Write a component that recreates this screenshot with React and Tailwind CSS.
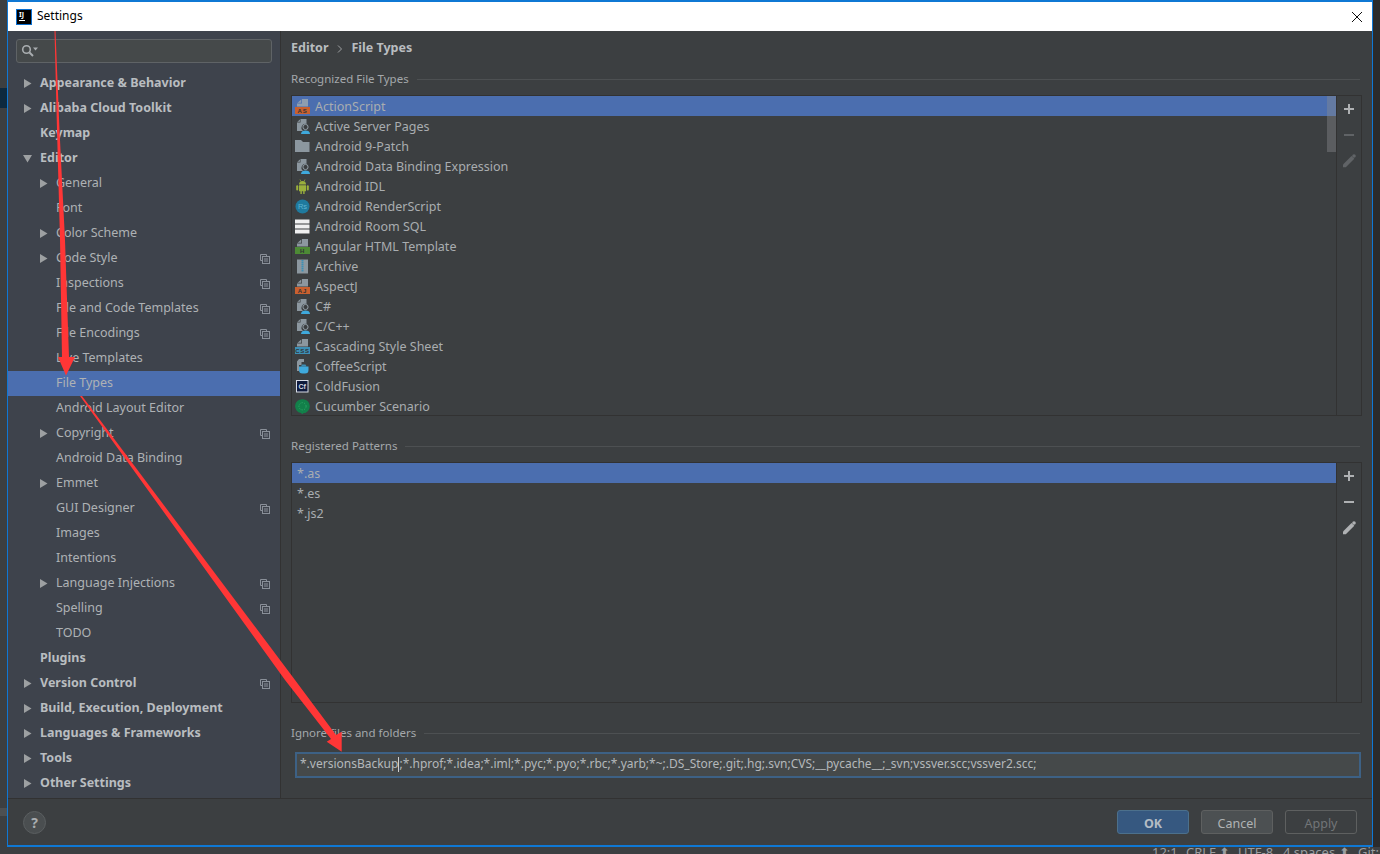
import React from 'react';

const sidebarItems = [
  { label: 'Appearance & Behavior', bold: true, arrow: 'right' },
  { label: 'Alibaba Cloud Toolkit', bold: true, arrow: 'right' },
  { label: 'Keymap', bold: true },
  { label: 'Editor', bold: true, arrow: 'down' },
  { label: 'General', arrow: 'right', sub: true },
  { label: 'Font', sub: true },
  { label: 'Color Scheme', arrow: 'right', sub: true },
  { label: 'Code Style', arrow: 'right', sub: true, copy: true },
  { label: 'Inspections', sub: true, copy: true },
  { label: 'File and Code Templates', sub: true, copy: true },
  { label: 'File Encodings', sub: true, copy: true },
  { label: 'Live Templates', sub: true },
  { label: 'File Types', sub: true, selected: true },
  { label: 'Android Layout Editor', sub: true },
  { label: 'Copyright', arrow: 'right', sub: true, copy: true },
  { label: 'Android Data Binding', sub: true },
  { label: 'Emmet', arrow: 'right', sub: true },
  { label: 'GUI Designer', sub: true, copy: true },
  { label: 'Images', sub: true },
  { label: 'Intentions', sub: true },
  { label: 'Language Injections', arrow: 'right', sub: true, copy: true },
  { label: 'Spelling', sub: true, copy: true },
  { label: 'TODO', sub: true },
  { label: 'Plugins', bold: true },
  { label: 'Version Control', bold: true, arrow: 'right', copy: true },
  { label: 'Build, Execution, Deployment', bold: true, arrow: 'right' },
  { label: 'Languages & Frameworks', bold: true, arrow: 'right' },
  { label: 'Tools', bold: true, arrow: 'right' },
  { label: 'Other Settings', bold: true, arrow: 'right' },
];

const fileTypes = [
  { label: 'ActionScript', icon: 'as', selected: true },
  { label: 'Active Server Pages', icon: 'person' },
  { label: 'Android 9-Patch', icon: 'folder' },
  { label: 'Android Data Binding Expression', icon: 'person' },
  { label: 'Android IDL', icon: 'android' },
  { label: 'Android RenderScript', icon: 'rs' },
  { label: 'Android Room SQL', icon: 'room' },
  { label: 'Angular HTML Template', icon: 'html' },
  { label: 'Archive', icon: 'archive' },
  { label: 'AspectJ', icon: 'aj' },
  { label: 'C#', icon: 'person' },
  { label: 'C/C++', icon: 'person' },
  { label: 'Cascading Style Sheet', icon: 'css' },
  { label: 'CoffeeScript', icon: 'coffee' },
  { label: 'ColdFusion', icon: 'cf' },
  { label: 'Cucumber Scenario', icon: 'cucumber' },
];

const Page = () => <path d="M7 0h6v7.5H2V4.5h5zM2.5 3.8L6.3 0.6v3.2z" fill="#9aa7b0" fillOpacity="0.85" />;

const Badge = ({ color, text }) => (
  <>
    <Page />
    <rect x="0" y="8" width="15" height="7" fill={color} />
    <text x="7.5" y="13.8" textAnchor="middle" fontSize="6" fontWeight="700" fill="#2f3234" letterSpacing="0.8" fontFamily="Liberation Sans, sans-serif">{text}</text>
  </>
);

const FileIcon = ({ type }) => {
  let body = null;
  if (type === 'as') body = <Badge color="#c9602f" text="AS" />;
  if (type === 'aj') body = <Badge color="#c9602f" text="AJ" />;
  if (type === 'html') body = <Badge color="#4d8a35" text="H" />;
  if (type === 'css') body = <Badge color="#3d8fb5" text="CSS" />;
  if (type === 'person') body = (
    <>
      <path d="M5.5 0h6v5a4 4 0 0 0-3.5 7H2V3.5h3.5zM2.3 2.8L5 0.4v2.4z" fill="#9aa7b0" fillOpacity="0.85" />
      <circle cx="10.5" cy="8" r="2.6" fill="#3c3f41" stroke="#9aa7b0" strokeWidth="0.9" />
      <path d="M6 15c0-2.6 2-3.6 4.5-3.6s4.5 1 4.5 3.6z" fill="#3fa9dc" />
    </>
  );
  if (type === 'folder') body = <path d="M0 1h6l2 2h6.5v10H0z" fill="#9aa7b0" fillOpacity="0.85" />;
  if (type === 'android') body = (
    <>
      <path d="M4 5.5a3.5 3.5 0 0 1 7 0z" fill="#9ab03c" />
      <path d="M4 6.3h7v6H9.6V15H8.2v-2.7H6.8V15H5.4v-2.7H4z" fill="#9ab03c" />
      <rect x="1.2" y="6.3" width="2" height="5.2" rx="1" fill="#9ab03c" />
      <rect x="11.8" y="6.3" width="2" height="5.2" rx="1" fill="#9ab03c" />
      <path d="M5 0.5l1 2M10 0.5l-1 2" stroke="#9ab03c" strokeWidth="0.7" />
    </>
  );
  if (type === 'rs') body = (
    <>
      <circle cx="7.5" cy="7.5" r="7" fill="#1f7a9e" />
      <text x="7.5" y="10.2" textAnchor="middle" fontSize="7.5" fill="#5fb4d0" fontFamily="Liberation Sans, sans-serif">Rs</text>
    </>
  );
  if (type === 'room') body = (
    <>
      <rect x="0" y="0.5" width="14.5" height="4" fill="#f0f0f0" />
      <rect x="0" y="5.5" width="14.5" height="4" fill="#f0f0f0" />
      <rect x="0" y="10.5" width="14.5" height="4" fill="#f0f0f0" />
    </>
  );
  if (type === 'archive') body = (
    <>
      <rect x="2" y="0.5" width="11" height="14" fill="#9aa7b0" fillOpacity="0.85" />
      <path d="M6.5 1h2v1.5h-2zM8.5 3h-2v1.5h2zM6.5 5h2v1.5h-2zM8.5 7h-2v1.5h2zM6.5 9h2v1.5h-2zM8.5 11h-2v1.5h2z" fill="#3d8fb5" />
    </>
  );
  if (type === 'coffee') body = (
    <>
      <path d="M4 0h5v3H6.5v3H2V2.5z" fill="#9aa7b0" fillOpacity="0.85" />
      <path d="M2 6h2v6H2z" fill="#9aa7b0" fillOpacity="0.85" />
      <path d="M4 7.5h9.5v3.5a3.5 3.5 0 0 1-3.5 3.5H7.5A3.5 3.5 0 0 1 4 11z" fill="#3fa9dc" />
      <path d="M7 5.5h3.5l1 2H6z" fill="#3fa9dc" fillOpacity="0.75" />
    </>
  );
  if (type === 'cf') body = (
    <>
      <rect x="1.5" y="1.5" width="11.5" height="11.5" fill="#0f1a3c" stroke="#d7dbe6" strokeWidth="1" />
      <text x="7.2" y="10" textAnchor="middle" fontSize="7" fontWeight="700" fill="#d7dbe6" fontFamily="Liberation Sans, sans-serif">Cf</text>
    </>
  );
  if (type === 'cucumber') body = (
    <>
      <path d="M7.5 0.2a7 7 0 0 1 0.6 14L7.5 15.4 6 14.1A7 7 0 0 1 7.5 0.2z" fill="#12804a" />
      <circle cx="7.5" cy="7.3" r="3.6" fill="none" stroke="#2fa868" strokeWidth="1" strokeDasharray="1.3 1.3" />
    </>
  );
  return (
    <svg width="15" height="15" viewBox="0 0 15 15" className="shrink-0">{body}</svg>
  );
};

const CopyIcon = () => (
  <svg width="10" height="10" viewBox="0 0 10 10" className="shrink-0">
    <path d="M0.5 0.5h6v2M0.5 0.5v6h2" fill="none" stroke="#8a9099" />
    <rect x="2.5" y="2.5" width="7" height="7" fill="none" stroke="#8a9099" />
    <path d="M4 5h4M4 7h4" stroke="#8a9099" />
  </svg>
);

const Caret = ({ dir }) => (
  <svg width="9" height="9" viewBox="0 0 9 9" className="shrink-0">
    {dir === 'down'
      ? <path d="M0 1h9L4.5 8.5z" fill="#9da0a2" />
      : <path d="M1 0v9l7.5-4.5z" fill="#9da0a2" />}
  </svg>
);

const SideRow = ({ item }) => (
  <div className={`h-[25px] flex items-center pr-[10px] ${item.selected ? 'bg-[#4b6eaf]' : ''} ${item.sub ? 'pl-[31px]' : 'pl-[15px]'}`}>
    <div className="w-[17px] shrink-0 flex items-center">{item.arrow && <Caret dir={item.arrow} />}</div>
    <span className={`flex-1 text-[12.5px] whitespace-nowrap ${item.bold ? 'font-bold text-[#b9bdc0]' : 'text-[#aeb2b5]'}`}>{item.label}</span>
    {item.copy && <CopyIcon />}
  </div>
);

const SectionTitle = ({ children }) => (
  <div className="flex items-center gap-[8px] h-[16px] pr-[2px]">
    <span className="text-[11.5px] text-[#a4a8ab] whitespace-nowrap">{children}</span>
    <div className="flex-1 h-px bg-[#4d5052]" />
  </div>
);

const ToolButtons = ({ dim }) => (
  <div className="w-[25px] shrink-0 border-l border-[#323232] flex flex-col items-center pt-[5px] gap-[10px]">
    <svg width="16" height="16" viewBox="0 0 16 16">
      <path d="M3 8h10M8 3v10" stroke="#afb1b3" strokeWidth="2" />
    </svg>
    <svg width="16" height="16" viewBox="0 0 16 16">
      <path d="M3 8h10" stroke={dim ? '#606366' : '#afb1b3'} strokeWidth="2" />
    </svg>
    <svg width="16" height="16" viewBox="0 0 16 16">
      <path d="M2 11.5L10.5 3l2.8 2.8L4.8 14.3H2z" fill={dim ? '#606366' : '#afb1b3'} />
      <circle cx="13" cy="3" r="1.8" fill={dim ? '#606366' : '#afb1b3'} />
    </svg>
  </div>
);

// red annotation arrows drawn on top of the screenshot
const Arrows = () => (
  <svg className="absolute inset-0 pointer-events-none" width="1380" height="854" viewBox="0 0 1380 854">
    <path d="M54.5 31L55.5 31L59.5 130L65 240L69 357L75 357L66 375.5L58 357L62 357L60 240L57 130z" fill="#ff3636" />
    <path d="M80 396L82 396L295 680L336 735L341.7 731.7L341.7 751.7L326.7 741.7L331 739L285 680z" fill="#ff3636" />
  </svg>
);

const App = () => {
  return (
    <div className="relative w-[1380px] h-[854px] overflow-hidden bg-[#3c3f41]" style={{ fontFamily: '"Noto Sans", sans-serif' }}>
      <div className="flex h-[847px]">
        {/* IDE behind the dialog, left edge */}
        <div className="w-[7px] shrink-0 flex flex-col">
          <div className="h-[88px]" />
          <div className="h-[20px] bg-[#0d293e]" />
          <div className="h-[700px]" />
          <div className="h-[8px] bg-[#4d5052]" />
        </div>

        <div className="flex-1 min-w-0 border-2 border-x-[1px] border-[#0f78d4] flex flex-col bg-[#3c3f41]">
          {/* Title bar */}
          <div className="h-[29px] shrink-0 bg-white flex items-center pl-[8px] pr-[9px]">
            <div className="w-[16px] h-[16px] bg-black border border-[#0a6fd0] flex flex-col px-[2px] pt-[1px] shrink-0">
              <span className="text-[7px] leading-[8px] font-bold text-white">IJ</span>
              <div className="w-[6px] h-px bg-white mt-[1px]" />
            </div>
            <span className="ml-[5px] mb-[2px] flex-1 text-[12px] text-black">Settings</span>
            <svg width="12" height="12" viewBox="0 0 12 12">
              <path d="M1 1l10 10M11 1L1 11" stroke="#111" strokeWidth="1" />
            </svg>
          </div>

          <div className="flex-1 flex min-h-0 border-b border-[#323232]">
            {/* Sidebar */}
            <div className="w-[272px] shrink-0 bg-[#3e434c] pt-[8px]">
              <div className="mx-[8px] h-[24px] rounded-[3px] border border-[#5f6366] bg-[#45494a] flex items-center pl-[4px]">
                <svg width="17" height="14" viewBox="0 0 17 14">
                  <circle cx="5.5" cy="5.5" r="3.8" fill="none" stroke="#a9adb0" strokeWidth="1.6" />
                  <path d="M8.5 8.5L12 12" stroke="#a9adb0" strokeWidth="2" />
                  <path d="M12 3.5h5L14.5 6.5z" fill="#a9adb0" />
                </svg>
              </div>
              <div className="mt-[8px]">
                {sidebarItems.map(item => <SideRow key={item.label} item={item} />)}
              </div>
            </div>

            {/* Main panel */}
            <div className="flex-1 min-w-0 border-l border-[#323232] pl-[10px] pr-[10px] flex flex-col">
              <div className="h-[32px] pt-[3px] flex items-center gap-[9px] text-[12.5px] font-bold text-[#b9bdc0]">
                <span>Editor</span>
                <svg width="5" height="8" viewBox="0 0 5 8"><path d="M1 0.5L4.5 4L1 7.5" fill="none" stroke="#9da0a2" /></svg>
                <span>File Types</span>
              </div>
              <div className="mt-[8px]"><SectionTitle>Recognized File Types</SectionTitle></div>
              <div className="mt-[8px] h-[321px] border border-[#323232] flex relative">
                <div className="flex-1 min-w-0 overflow-hidden">
                  {fileTypes.map(f => (
                    <div key={f.label} className={`h-[20px] flex items-center pl-[3px] gap-[5px] ${f.selected ? 'bg-[#4b6eaf]' : ''}`}>
                      <FileIcon type={f.icon} />
                      <span className="text-[12.5px] pt-[2px] text-[#a9adb0] whitespace-nowrap">{f.label}</span>
                    </div>
                  ))}
                </div>
                <div className="absolute right-[25px] top-0 w-[9px] h-[56px] bg-[#8a8d8f]/40" />
                <ToolButtons dim />
              </div>

              <div className="mt-[22px]"><SectionTitle>Registered Patterns</SectionTitle></div>
              <div className="mt-[8px] h-[241px] border border-[#323232] flex">
                <div className="flex-1 min-w-0">
                  {['*.as', '*.es', '*.js2'].map((p, i) => (
                    <div key={p} className={`h-[20px] flex items-center pl-[5px] pt-[2px] text-[12.5px] text-[#a9adb0] ${i === 0 ? 'bg-[#4b6eaf]' : ''}`}>{p}</div>
                  ))}
                </div>
                <ToolButtons />
              </div>

              <div className="mt-[22px]"><SectionTitle>Ignore files and folders</SectionTitle></div>
              <div className="mt-[11px] ml-[4px] mr-[1px] h-[26px] border-2 border-[#3d6185] bg-[#45494a] flex items-center pl-[3px] pb-[2px] text-[12px] text-[#b4b8bb] whitespace-nowrap overflow-hidden">
                <span>*.versionsBackup</span>
                <span className="w-px h-[15px] bg-[#d0d0d0]" />
                <span>;*.hprof;*.idea;*.iml;*.pyc;*.pyo;*.rbc;*.yarb;*~;.DS_Store;.git;.hg;.svn;CVS;__pycache__;_svn;vssver.scc;vssver2.scc;</span>
              </div>
            </div>
          </div>

          {/* Footer */}
          <div className="h-[46px] shrink-0 flex items-center pl-[15px] pr-[15px]">
            <div className="w-[23px] h-[23px] rounded-full bg-[#4a4e50] border border-[#5a5e60] flex items-center justify-center text-[14px] font-bold text-[#a9adb0]">?</div>
            <div className="flex-1" />
            <div className="flex gap-[12px]">
              <button className="w-[72px] h-[24px] pt-[4px] rounded-[3px] bg-[#365880] border border-[#4c708c] text-[12.5px] leading-[16px] font-bold text-[#b4bcc4]">OK</button>
              <button className="w-[72px] h-[24px] pt-[4px] rounded-[3px] bg-[#4c5052] border border-[#5e6060] text-[12.5px] leading-[16px] text-[#b0b3b5]">Cancel</button>
              <button className="w-[72px] h-[24px] pt-[4px] rounded-[3px] border border-[#5e6060] text-[12.5px] leading-[16px] text-[#727578]">Apply</button>
            </div>
          </div>
        </div>

        <div className="w-[7px] shrink-0 bg-[#2b2b2b]" />
      </div>

      {/* Status bar of the IDE, cut off by the bottom of the picture */}
      <div className="h-[7px] pl-[1152px] flex text-[13px] leading-[10px] text-[#9a9da0] whitespace-nowrap overflow-hidden">
        <span className="w-[34px] shrink-0">12:1</span>
        <span className="w-[52px] shrink-0">CRLF ⬍</span>
        <span className="w-[45px] shrink-0">UTF-8</span>
        <span className="w-[75px] shrink-0">4 spaces ⬍</span>
        <span className="w-[22px] shrink-0">Git:</span>
      </div>
      <Arrows />
    </div>
  );
};

export default App;
